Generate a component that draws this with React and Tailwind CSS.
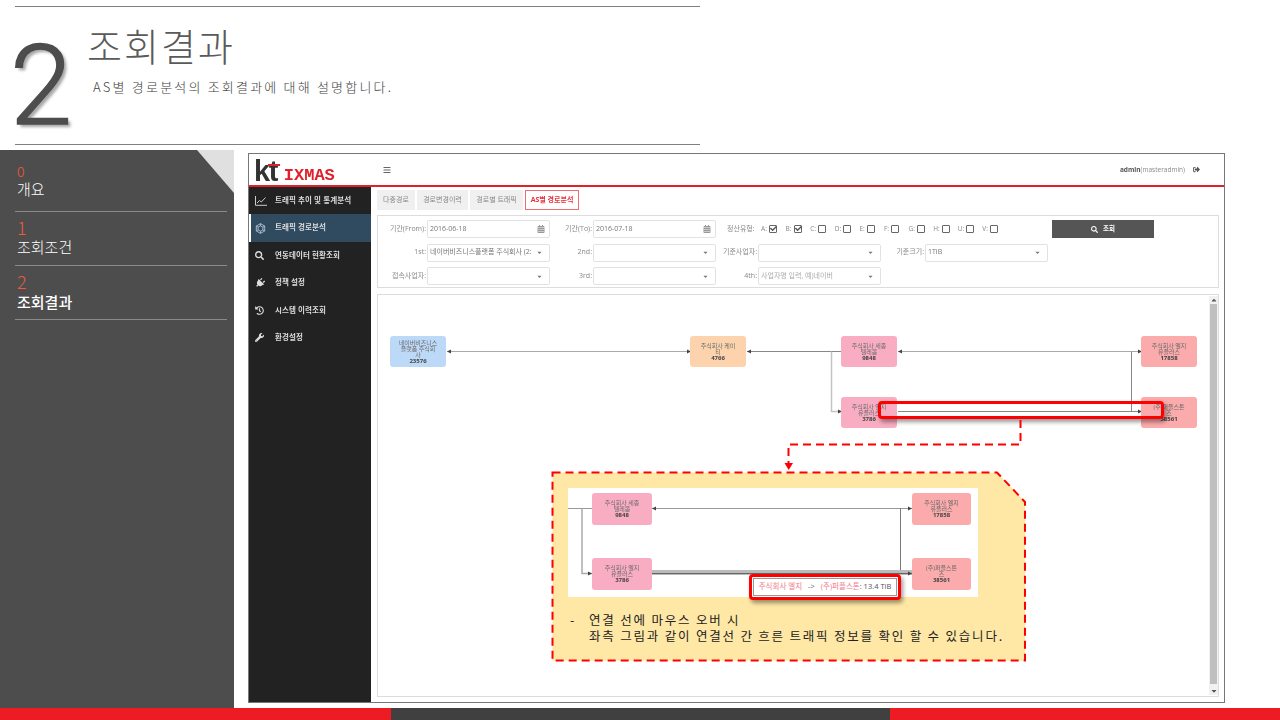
import React from "react";
import { FaBars, FaSearch, FaPlug, FaHistory, FaWrench, FaCalendarAlt, FaSignOutAlt, FaCheck, FaCaretDown, FaCaretUp } from "react-icons/fa";

const Node = ({ x, y, w = 56, h = 31, color, lines, value, size = "text-[6px]" }) => (
  <div
    className={`absolute rounded-[3px] flex flex-col items-center justify-center text-center leading-[6px] text-[#6b6b6b] ${size}`}
    style={{ left: x, top: y, width: w, height: h, background: color }}
  >
    {lines.map((l) => <span key={l}>{l}</span>)}
    <span className="font-bold text-[#444]">{value}</span>
  </div>
);

const Arrow = ({ x, y, dir }) => (
  <polygon fill="#444" points={dir === "l" ? `${x},${y} ${x + 4},${y - 2} ${x + 4},${y + 2}` : `${x},${y} ${x - 4},${y - 2} ${x - 4},${y + 2}`} />
);

const Select = ({ w = "w-[123px]", value, placeholder }) => (
  <div className={`${w} h-[18px] bg-white border border-[#e2e2e2] rounded-[2px] flex items-center justify-between pl-[2px] pr-[6px] text-[7px] text-[#777] whitespace-nowrap overflow-hidden`}>
    <span className={placeholder ? "text-[#aaa]" : ""}>{value || placeholder}</span>
    <FaCaretDown className="text-[#777] text-[7px] shrink-0" />
  </div>
);

const DateBox = ({ value }) => (
  <div className="w-[123px] h-[18px] bg-white border border-[#e2e2e2] rounded-[2px] flex items-center justify-between pl-[2px] pr-[4px] text-[7px] text-[#777]">
    <span>{value}</span>
    <FaCalendarAlt className="text-[#999] text-[8px]" />
  </div>
);

const Label = ({ w, children }) => (
  <span className={`${w} shrink-0 text-right pr-[1px] text-[7px] text-[#888] whitespace-nowrap`}>{children}</span>
);

const TrafficIcon = () => (
  <svg width="11" height="11" viewBox="0 0 12 12" fill="none" stroke="#bcd" strokeWidth="0.9">
    <polygon points="6,0.7 10.6,3.3 10.6,8.7 6,11.3 1.4,8.7 1.4,3.3" />
    <polygon points="6,3 8.6,4.5 8.6,7.5 6,9 3.4,7.5 3.4,4.5" />
    <path d="M6 .7V3M10.6 3.3L8.6 4.5M10.6 8.7L8.6 7.5M6 11.3V9M1.4 8.7L3.4 7.5M1.4 3.3L3.4 4.5" />
  </svg>
);

const LineIcon = () => (
  <svg width="12" height="10" viewBox="0 0 12 10" fill="none" stroke="#ccc" strokeWidth="1">
    <path d="M.5 0V9.3H12" />
    <path d="M2 7L4.5 4.5L6.3 6L10.5 1.5" />
  </svg>
);

const menu = [
  ["트래픽 추이 및 통계분석", <LineIcon />],
  ["트래픽 경로분석", <TrafficIcon />],
  ["연동데이터 현황조회", <FaSearch className="text-[#ddd] text-[9px]" />],
  ["정책 설정", <FaPlug className="text-[#ddd] text-[10px] rotate-45" />],
  ["시스템 이력조회", <FaHistory className="text-[#ddd] text-[9px]" />],
  ["환경설정", <FaWrench className="text-[#ddd] text-[9px]" />],
];

const checks = [["A", true], ["B", true], ["C"], ["D"], ["E"], ["F"], ["G"], ["H"], ["U"], ["V"]];

export default function App() {
  return (
    <div className="relative w-[1280px] h-[720px] overflow-hidden bg-white flex flex-col [font-family:'Open_Sans','Noto_Sans_CJK_KR',sans-serif]">
      {/* slide heading */}
      <header className="h-[150px] shrink-0 pl-[15px] pt-[6px]">
        <div className="w-[685px] h-[139px] border-t border-b border-[#7f7f7f] flex">
          <div className="w-[72px] shrink-0 -ml-[5px] mt-[18px] text-[112px] leading-[122px] font-light text-[#4d4d4d] [font-family:Roboto,sans-serif] [-webkit-text-stroke:1.5px_#4d4d4d] [text-shadow:3px_3px_3px_rgba(0,0,0,0.35)]">2</div>
          <div className="pl-[5px]">
            <h1 className="mt-[13px] text-[38px] leading-[50px] font-light tracking-[2px] text-[#5a5a5a] [font-family:'Noto_Sans_CJK_KR',sans-serif]">조회결과</h1>
            <p className="mt-[7px] ml-[6px] text-[13px] leading-[20px] font-light tracking-[2.2px] text-[#404040] [font-family:'Noto_Sans_CJK_KR',sans-serif]">AS별 경로분석의 조회결과에 대해 설명합니다.</p>
          </div>
        </div>
      </header>

      <div className="flex-1 flex min-h-0">
        {/* slide nav */}
        <nav className="relative w-[234px] shrink-0 bg-[#4d4d4d] pl-[15px] pr-[7px] [font-family:'Noto_Sans_CJK_KR',sans-serif] font-light">
          <div className="absolute top-0 right-0 w-[37px] h-[43px] bg-[#e0e0e0] [clip-path:polygon(0_0,100%_0,100%_100%)]" />
          <div className="h-[62px] border-b border-[#8a8a8a] pl-[2px] pt-[12px]">
            <div className="text-[14px] leading-[18px] text-[#f0583f]">0</div>
            <div className="text-[15px] leading-[18px] text-white">개요</div>
          </div>
          <div className="h-[54px] border-b border-[#8a8a8a] pl-[2px] pt-[4px]">
            <div className="text-[18px] leading-[22px] text-[#f0583f]">1</div>
            <div className="text-[15px] leading-[18px] text-white">조회조건</div>
          </div>
          <div className="h-[54px] border-b border-[#8a8a8a] pl-[2px] pt-[4px]">
            <div className="text-[18px] leading-[23px] text-[#f0583f]">2</div>
            <div className="text-[15px] leading-[18px] text-white font-medium">조회결과</div>
          </div>
        </nav>

        {/* embedded app screenshot */}
        <main className="flex-1 pl-[14px] pt-[3px] pb-[5px]">
          <div className="relative w-[977px] h-[550px] border border-[#777] flex flex-col bg-white blur-[0.3px]">
            <div className="h-[33px] shrink-0 border-b-2 border-[#e0202a] flex items-center">
              <div className="w-[122px] shrink-0 pl-[5px] flex items-end h-[28px] gap-[7px]">
                <div className="relative text-[29px] leading-[26px] font-bold tracking-[-1.5px] text-[#333] [font-family:'Liberation_Sans',sans-serif]">
                  kt
                  <span className="absolute left-[14px] top-[6px] w-[12px] h-[2px] bg-[#e0202a]" />
                </div>
                <span className="text-[17px] leading-[17px] font-bold text-[#e0202a] [font-family:'Liberation_Mono',monospace]">IXMAS</span>
              </div>
              <FaBars className="ml-[12px] text-[#666] text-[8px]" />
              <div className="ml-auto pr-[24px] flex items-center text-[6.5px] text-[#888]">
                <b className="text-[#555]">admin</b>(masteradmin)
                <FaSignOutAlt className="ml-[8px] text-[#555] text-[7px]" />
              </div>
            </div>

            <div className="flex-1 flex min-h-0">
              <aside className="w-[122px] shrink-0 bg-[#222222]">
                {menu.map(([label, icon], i) => (
                  <div key={label} className={`h-[27.4px] flex items-center text-[7.5px] font-bold tracking-[0.1px] text-[#ddd] ${i === 1 ? "bg-[#304a5f] border-l-2 border-white pl-[4px]" : "pl-[6px]"}`}>
                    <span className="w-[20px] flex justify-start">{icon}</span>
                    <span className="whitespace-nowrap">{label}</span>
                  </div>
                ))}
              </aside>

              <section className="flex-1 pl-[6px] pr-[5px] pt-[3px] pb-[5px] flex flex-col min-w-0">
                <div className="flex h-[20px] gap-[2px] text-[7px] text-[#888] shrink-0">
                  <span className="w-[38px] bg-[#f0f0f0] flex items-center justify-center">다중경로</span>
                  <span className="w-[51px] bg-[#f0f0f0] flex items-center justify-center">경로변경이력</span>
                  <span className="w-[53px] bg-[#f0f0f0] flex items-center justify-center">경로별 트래픽</span>
                  <span className="w-[54px] bg-white border border-[#f26a72] text-[#e8303c] font-bold flex items-center justify-center">AS별 경로분석</span>
                </div>

                <div className="mt-[5px] h-[73px] shrink-0 border border-[#ddd] pl-[2px] pr-[1px] pt-[4px] flex flex-col gap-[5.5px]">
                  <div className="flex items-center h-[18px]">
                    <Label w="w-[47px]">기간(From):</Label>
                    <DateBox value="2016-06-18" />
                    <Label w="w-[43px]">기간(To):</Label>
                    <DateBox value="2016-07-18" />
                    <span className="ml-[11px] w-[33px] text-[7px] text-[#888] whitespace-nowrap">정산유형:</span>
                    <div className="flex w-[292px] shrink-0 pl-[1px]">
                      {checks.map(([k, on]) => (
                        <span key={k} className="w-[24.6px] flex items-center text-[6.5px] text-[#888]">
                          {k}:
                          <span className="relative ml-[2px] w-[8px] h-[8px] border border-[#666] rounded-[1px]">
                            {on && <FaCheck className="absolute -top-[1px] left-0 text-[7px] text-[#555]" />}
                          </span>
                        </span>
                      ))}
                    </div>
                    <div className="w-[102px] h-[18px] bg-[#555555] flex items-center justify-center gap-[5px] text-[6.5px] font-bold text-white">
                      <FaSearch className="text-[7px]" />조회
                    </div>
                  </div>
                  <div className="flex items-center h-[18px]">
                    <Label w="w-[47px]">1st:</Label>
                    <Select value="네이버비즈니스플랫폼 주식회사 (2:" />
                    <Label w="w-[43px]">2nd:</Label>
                    <Select />
                    <Label w="w-[42px]">기준사업자:</Label>
                    <Select />
                    <Label w="w-[44px]">기준크기:</Label>
                    <Select value="1TiB" />
                  </div>
                  <div className="flex items-center h-[18px]">
                    <Label w="w-[47px]">접속사업자:</Label>
                    <Select />
                    <Label w="w-[43px]">3rd:</Label>
                    <Select />
                    <Label w="w-[42px]">4th:</Label>
                    <Select placeholder="사업자명 입력, 예)네이버" />
                  </div>
                </div>

                <div className="relative mt-[6px] flex-1 border border-[#ddd] flex justify-end min-h-0">
                  <div className="w-[9px] my-[1px] bg-[#f1f1f1] flex flex-col items-center">
                    <FaCaretUp className="text-[#555] text-[6px] h-[8px]" />
                    <div className="w-[7px] flex-1 bg-[#bfbfbf]" />
                    <div className="h-[3px]" />
                    <FaCaretDown className="text-[#555] text-[6px] h-[8px]" />
                  </div>
                </div>
              </section>
            </div>

            {/* flow diagram, in coordinates of the box (origin 249,154) */}
            <svg className="absolute left-[1px] top-0 pointer-events-none" width="975" height="548" fill="none">
              <g stroke="#aaa" strokeWidth="1">
                <path d="M197 197.5H441" />
                <path d="M497 197.5H592" stroke="#888" />
                <path d="M648 197.5H892" />
                <path d="M581.5 197.5V257.5H592" strokeWidth="1.5" stroke="#c4c4c4" />
                <path d="M648 257.5H892" stroke="#888" />
                <path d="M881.5 197.5V257.5" stroke="#888" />
              </g>
              <Arrow x={197} y={197.5} dir="l" /><Arrow x={441} y={197.5} dir="r" />
              <Arrow x={497} y={197.5} dir="l" /><Arrow x={648} y={197.5} dir="l" />
              <Arrow x={892} y={197.5} dir="r" /><Arrow x={592} y={257.5} dir="r" /><Arrow x={892} y={257.5} dir="r" />
            </svg>
            <Node x={141} y={182} color="#bdd9f8" lines={["네이버비즈니스", "플랫폼 주식회", "사"]} value="23576" />
            <Node x={441} y={182} color="#fdd3ae" lines={["주식회사 케이", "티"]} value="4766" />
            <Node x={592} y={182} color="#f9adc2" lines={["주식회사 세종", "텔레콤"]} value="9848" />
            <Node x={892} y={182} color="#fbabab" lines={["주식회사 엘지", "유플러스"]} value="17858" />
            <Node x={592} y={243} color="#f9adc2" lines={["주식회사 엘지", "유플러스"]} value="3786" />
            <Node x={892} y={243} color="#fbabab" lines={["(주)퍼플스톤", "즈"]} value="38561" />
          </div>
        </main>
      </div>

      <footer className="h-[12px] shrink-0 flex">
        <div className="w-[391px] bg-[#ed1c24]" />
        <div className="w-[499px] bg-[#404040]" />
        <div className="flex-1 bg-[#ed1c24]" />
      </footer>

      {/* annotation overlay */}
      <div className="absolute left-[878px] top-[401px] w-[286px] h-[18px] border-[3px] border-[#ff0000] rounded-[4px] shadow-[2px_3px_4px_rgba(0,0,0,0.4)]" />
      <svg className="absolute left-0 top-0 pointer-events-none" width="1280" height="720" fill="none">
        <path d="M1020.5 420V444.5H788.5V464" stroke="#ff0000" strokeWidth="2" strokeDasharray="8 5" />
        <polygon points="784.5,463 793,463 788.7,470" fill="#ff0000" />
        <polygon points="552.5,472.5 997,472.5 1025,502 1025,660.5 552.5,660.5" fill="#ffe8a6" stroke="#ff0000" strokeWidth="2" strokeDasharray="8 5" />
      </svg>

      {/* zoomed hover example */}
      <div className="absolute left-[568px] top-[488px] w-[410px] h-[109px] bg-white blur-[0.3px]">
        <svg className="absolute left-0 top-0" width="410" height="109" fill="none">
          <path d="M0 20.5H24M84 20.5H344" stroke="#999" />
          <path d="M14 20.5V85.5H24" stroke="#aaa" strokeWidth="1.5" />
          <path d="M332.5 20.5V85.5" stroke="#777" />
          <path d="M84 84.5H344" stroke="#bbb" strokeWidth="5" />
          <path d="M84 85.5H344" stroke="#666" />
          <Arrow x={84} y={20.5} dir="l" /><Arrow x={344} y={20.5} dir="r" />
          <Arrow x={24} y={85.5} dir="r" /><Arrow x={344} y={85.5} dir="r" />
        </svg>
        <Node x={24} y={5} w={60} h={32} color="#f9adc2" lines={["주식회사 세종", "텔레콤"]} value="9848" />
        <Node x={344} y={5} w={59} h={32} color="#fbabab" lines={["주식회사 엘지", "유플러스"]} value="17858" />
        <Node x={24} y={70} w={60} h={32} color="#f9adc2" lines={["주식회사 엘지", "유플러스"]} value="3786" />
        <Node x={344} y={70} w={59} h={32} color="#fbabab" lines={["(주)퍼플스톤", "즈"]} value="38561" />
      </div>
      <div className="absolute left-[749px] top-[574px] w-[152px] h-[26px] border-[3px] border-[#ff0000] rounded-[4px] bg-white p-[1px] shadow-[2px_3px_4px_rgba(0,0,0,0.4)]">
        <div className="h-full border border-[#999] flex items-center justify-center gap-[6px] text-[7.5px] whitespace-nowrap">
          <span className="text-[#f2798a]">주식회사 엘지</span>
          <span className="text-[#666]">-&gt;</span>
          <span><span className="text-[#f2798a]">(주)퍼플스톤</span><span className="text-[#555]">: 13.4 TiB</span></span>
        </div>
      </div>

      <div className="absolute left-[570px] top-[612px] flex text-[12.5px] leading-[16px] tracking-[1.8px] text-[#222] [font-family:'Noto_Sans_CJK_KR',sans-serif]">
        <span className="w-[19px]">-</span>
        <div className="whitespace-nowrap">
          <div>연결 선에 마우스 오버 시</div>
          <div>좌측 그림과 같이 연결선 간 흐른 트래픽 정보를 확인 할 수 있습니다.</div>
        </div>
      </div>
    </div>
  );
}
